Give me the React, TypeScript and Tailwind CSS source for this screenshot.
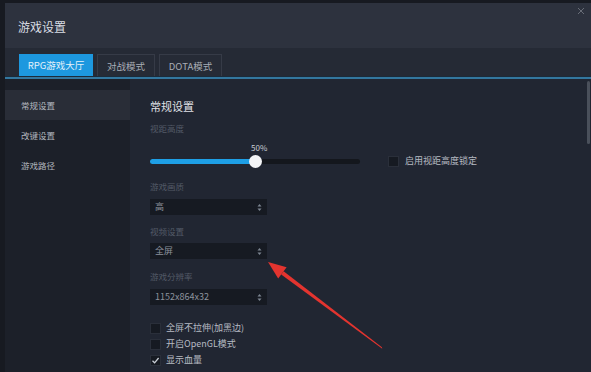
import React from 'react';

const font = { fontFamily: '"Noto Sans CJK SC", "Noto Sans", sans-serif' };

function Spinner() {
  return (
    <svg width="5" height="9" viewBox="0 0 5 9" className="shrink-0">
      <path d="M0.5 3.5 L2.5 1 L4.5 3.5 Z" fill="#7d8591" />
      <path d="M0.5 5.5 L2.5 8 L4.5 5.5 Z" fill="#7d8591" />
    </svg>
  );
}

function SelectBox({ value }: { value: string }) {
  return (
    <div className="flex items-center justify-between w-[117px] h-[16px] bg-[#161a22] pl-[5px] pr-[5px]">
      <span className="text-[9px] leading-[12px] text-[#8c929c]">{value}</span>
      <Spinner />
    </div>
  );
}

function Check({ label, checked }: { label: string; checked?: boolean }) {
  return (
    <div className="flex items-center h-[16px]">
      <div className="w-[11px] h-[11px] bg-[#161a22] border border-[#2a2f3a] flex items-center justify-center">
        {checked && (
          <svg width="9" height="9" viewBox="0 0 9 9">
            <path d="M1.5 4.8 L3.6 6.8 L7.6 2" stroke="#c9ced6" strokeWidth="1.3" fill="none" />
          </svg>
        )}
      </div>
      <span className="ml-[5px] text-[9px] leading-[12px] text-[#b7bbc3]">{label}</span>
    </div>
  );
}

function Label({ children, className = '' }: { children: React.ReactNode; className?: string }) {
  return <div className={`text-[8.5px] leading-[12px] text-[#535a67] ${className}`}>{children}</div>;
}

export default function App() {
  const tabs = [
    { name: 'RPG游戏大厅', w: 'w-[74px]', active: true },
    { name: '对战模式', w: 'w-[58px]' },
    { name: 'DOTA模式', w: 'w-[63px]' },
  ];
  const menu = ['常规设置', '改键设置', '游戏路径'];

  return (
    <div className="relative w-[591px] h-[372px] overflow-hidden bg-[#171a21] pl-[5px] pt-[3px]" style={font}>
      <div className="flex flex-col h-full">
        {/* title bar */}
        <div className="relative h-[45px] bg-[#2d323e] flex items-center pl-[13px] pb-[2px]">
          <span className="text-[12px] leading-[16px] text-[#d9dde3] mt-[4px]">游戏设置</span>
          <svg width="8" height="8" viewBox="0 0 8 8" className="absolute right-[6px] top-[4px]">
            <path d="M1 1 L7 7 M7 1 L1 7" stroke="#686d77" strokeWidth="1" />
          </svg>
        </div>

        {/* tabs */}
        <div className="h-[28px] bg-[#252a35] flex items-end pl-[14px] gap-[4px]">
          {tabs.map(t => (
            <div
              key={t.name}
              className={`${t.w} h-[22px] flex items-center justify-center text-[9.5px] leading-[12px] ${
                t.active
                  ? 'bg-[#1d98df] text-[#e3f1fa]'
                  : 'border border-b-0 border-[#363b47] bg-[#262b36] text-[#a8adb5]'
              }`}
            >
              {t.name}
            </div>
          ))}
        </div>
        <div className="h-[1px] bg-[#1b2b3a]" />
        <div className="h-[2px] bg-[#33779f]" />

        {/* body */}
        <div className="flex flex-1 min-h-0">
          <div className="w-[125px] bg-[#1c2029] pt-[11px] flex flex-col">
            {menu.map((m, i) => (
              <div
                key={m}
                className={`h-[30px] flex items-center pl-[16px] text-[8.5px] leading-[12px] text-[#b3b7bf] ${
                  i === 0 ? 'bg-[#292d37]' : ''
                }`}
              >
                {m}
              </div>
            ))}
          </div>

          <div className="flex-1 bg-[#212632] flex">
            <div className="flex-1 flex flex-col pl-[20px] pt-[19px]">
              <div className="text-[11px] leading-[16px] text-[#e0e3e8]">常规设置</div>
              <Label className="mt-[8px]">视距高度</Label>

              <div className="flex items-end mt-[8px]">
                <div className="relative w-[210px] h-[26px]">
                  <span className="absolute left-[101px] top-0 text-[8px] leading-[12px] text-[#c9cdd4]">50%</span>
                  <div className="absolute left-0 right-0 top-[17px] h-[5px] rounded-full bg-[#14171d]" />
                  <div className="absolute left-0 w-[106px] top-[17px] h-[5px] rounded-full bg-[#1e9fe6]" />
                  <div className="absolute left-[99px] top-[13px] w-[13px] h-[13px] rounded-full bg-[#f3f4f6]" />
                </div>
                <div className="flex items-center ml-[28px] mb-[1px]">
                  <div className="w-[11px] h-[11px] bg-[#161a22] border border-[#2a2f3a]" />
                  <span className="ml-[6px] text-[9px] leading-[12px] text-[#b7bbc3]">启用视距高度锁定</span>
                </div>
              </div>

              <Label className="mt-[12px]">游戏画质</Label>
              <div className="mt-[7px]"><SelectBox value="高" /></div>

              <Label className="mt-[10px]">视频设置</Label>
              <div className="mt-[6px]"><SelectBox value="全屏" /></div>

              <Label className="mt-[11px]">游戏分辨率</Label>
              <div className="mt-[7px]"><SelectBox value="1152x864x32" /></div>

              <div className="mt-[15px] flex flex-col">
                <Check label="全屏不拉伸(加黑边)" />
                <Check label="开启OpenGL模式" />
                <Check label="显示血量" checked />
              </div>
            </div>

            {/* scrollbar */}
            <div className="w-[5px] pt-[2px] flex justify-center">
              <div className="w-[3px] h-[63px] rounded-full bg-[#4a505b]" />
            </div>
          </div>
        </div>
      </div>

      {/* red annotation arrow */}
      <svg className="absolute left-0 top-0 pointer-events-none" width="591" height="372" viewBox="0 0 591 372">
        <polygon points="283.6,271.2 381.9,347.2 382.3,348.8 281.2,274.4" fill="#e3342f" />
        <polygon points="268,262 286.6,267.2 278.2,278.4" fill="#e3342f" />
      </svg>
    </div>
  );
}
